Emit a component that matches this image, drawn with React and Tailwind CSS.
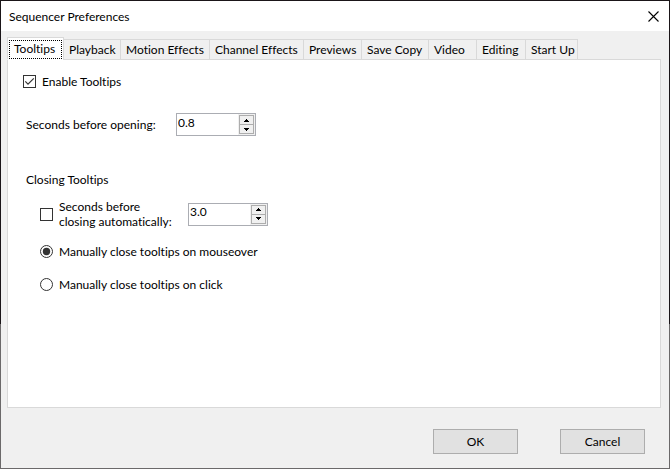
import { useState } from 'react';

const TABS = [
  { label: 'Tooltips',        width: 'w-[57px]' },
  { label: 'Playback',        width: 'w-[58px]' },
  { label: 'Motion Effects',  width: 'w-[90px]' },
  { label: 'Channel Effects', width: 'w-[95px]' },
  { label: 'Previews',        width: 'w-[59px]' },
  { label: 'Save Copy',       width: 'w-[68px]' },
  { label: 'Video',           width: 'w-[49px]' },
  { label: 'Editing',         width: 'w-[50px]' },
  { label: 'Start Up',        width: 'w-[53px]' },
];

function CheckBox({ id, checked, onChange }) {
  return (
    <span className="relative block size-[13px] shrink-0">
      <input
        id={id}
        type="checkbox"
        checked={checked}
        onChange={e => onChange(e.target.checked)}
        className="block size-[13px] appearance-none border border-[#333] bg-white"
      />
      {checked && (
        <svg className="pointer-events-none absolute inset-0" width="13" height="13" viewBox="0 0 13 13" fill="none" stroke="#333" strokeWidth="1.2">
          <path d="M2.3 6.4 5 9.1l5.8-5.8" />
        </svg>
      )}
    </span>
  );
}

function Radio({ id, checked, onChange, label }) {
  return (
    <div className="flex items-center gap-1.5">
      <span className="relative block size-[13px] shrink-0">
        <input
          id={id}
          type="radio"
          name="close-mode"
          checked={checked}
          onChange={onChange}
          className="block size-[13px] appearance-none rounded-full border border-[#333] bg-white"
        />
        {checked && (
          <svg className="pointer-events-none absolute inset-0" width="13" height="13" viewBox="0 0 13 13">
            <circle cx="6.5" cy="6.5" r="3.7" fill="#333" />
          </svg>
        )}
      </span>
      <label htmlFor={id}>{label}</label>
    </div>
  );
}

function SpinBox({ id, label, value, onChange }) {
  const step = (n) => onChange(Math.max(0, Number(value) + n).toFixed(1));
  const arrow = 'flex h-[10px] w-[15px] items-center justify-center border border-[#adadad] bg-[#f0f0f0]';

  return (
    <div className="flex h-[23px] w-20 shrink-0 items-start border border-[#abadb3] bg-white">
      <input
        id={id}
        type="text"
        aria-label={label}
        value={value}
        onChange={e => onChange(e.target.value)}
        className="h-4 min-w-0 flex-1 pl-px outline-none"
      />
      <div className="flex h-[21px] flex-col bg-[#f0f0f0] p-px">
        <button type="button" aria-label="Increase" onClick={() => step(0.1)} className={arrow}>
          <svg width="5" height="3" viewBox="0 0 5 3" shapeRendering="crispEdges"><path d="M2 0h1v1h1v1h1v1H0V2h1V1h1z" /></svg>
        </button>
        <button type="button" aria-label="Decrease" onClick={() => step(-0.1)} className={`${arrow} -mt-px`}>
          <svg width="5" height="3" viewBox="0 0 5 3" shapeRendering="crispEdges"><path d="M0 0h5v1H4v1H3v1H2V2H1V1H0z" /></svg>
        </button>
      </div>
    </div>
  );
}

export default function App() {
  const [tab, setTab] = useState('Tooltips');
  const [enabled, setEnabled] = useState(true);
  const [openDelay, setOpenDelay] = useState('0.8');
  const [autoClose, setAutoClose] = useState(false);
  const [closeDelay, setCloseDelay] = useState('3.0');
  const [closeMode, setCloseMode] = useState('mouseover');

  return (
    <div className="flex min-h-screen flex-col bg-linear-to-b from-[#1a1518] from-69% to-[#6b696a] to-69% p-px font-['Segoe_UI','Lato',sans-serif] text-[12px] leading-[15px] text-black [font-variant-ligatures:none]">
      <header className="flex h-[30px] items-center justify-between bg-white pl-2 pr-[10px]">
        <h1>Sequencer Preferences</h1>
        <button type="button" aria-label="Close">
          <svg width="11" height="11" viewBox="0 0 11 11" stroke="#000" strokeWidth="1.1"><path d="M.5.5l10 10M10.5.5l-10 10" /></svg>
        </button>
      </header>

      <main className="flex flex-1 flex-col bg-[#f0f0f0] px-[6px] pt-[6px] pb-[14px]">
        <div role="tablist" className="z-10 flex items-end">
          {TABS.map(t => (
            <button
              key={t.label}
              type="button"
              role="tab"
              aria-selected={tab === t.label}
              onClick={() => setTab(t.label)}
              className={`${t.width} -mr-px whitespace-nowrap border border-[#d9d9d9] text-left
                ${tab === t.label ? 'h-[23px] border-b-white bg-white p-px pb-0' : 'h-[21px] bg-[#f0f0f0] pl-[5px]'}
              `}
            >
              {tab === t.label
                ? <span className="block border border-dotted border-black pl-1 pb-0.5">{t.label}</span>
                : t.label}
            </button>
          ))}
        </div>

        <section role="tabpanel" className="-mt-px mr-[2px] flex flex-1 flex-col border border-[#d9d9d9] bg-white pl-[15px] pt-[14px]">
          <div className="flex items-center gap-1.5">
            <CheckBox id="enable" checked={enabled} onChange={setEnabled} />
            <label htmlFor="enable">Enable Tooltips</label>
          </div>

          <div className="pl-[3px]">
            <div className="mt-6 flex items-center">
              <label htmlFor="open-delay" className="w-[150px]">Seconds before opening:</label>
              <SpinBox id="open-delay" value={openDelay} onChange={setOpenDelay} />
            </div>

            <h2 className="mt-9">Closing Tooltips</h2>

            <div className="mt-3 pl-[14px]">
              <div className="flex items-center gap-1.5">
                <CheckBox id="auto-close" checked={autoClose} onChange={setAutoClose} />
                <label htmlFor="auto-close" className="w-[123px]">Seconds before<br />closing automatically:</label>
                <SpinBox id="close-delay" label="Seconds before closing" value={closeDelay} onChange={setCloseDelay} />
              </div>
              <div className="mt-[15px] flex flex-col gap-[18px]">
                <Radio id="close-mouseover" label="Manually close tooltips on mouseover" checked={closeMode === 'mouseover'} onChange={() => setCloseMode('mouseover')} />
                <Radio id="close-click" label="Manually close tooltips on click" checked={closeMode === 'click'} onChange={() => setCloseMode('click')} />
              </div>
            </div>
          </div>
        </section>

        <footer className="mt-[21px] flex justify-end gap-[42px] pr-[18px]">
          {['OK', 'Cancel'].map(name => (
            <button key={name} type="button" className="h-[25px] w-[85px] border border-[#adadad] bg-[#e1e1e1]">{name}</button>
          ))}
        </footer>
      </main>
    </div>
  );
}
